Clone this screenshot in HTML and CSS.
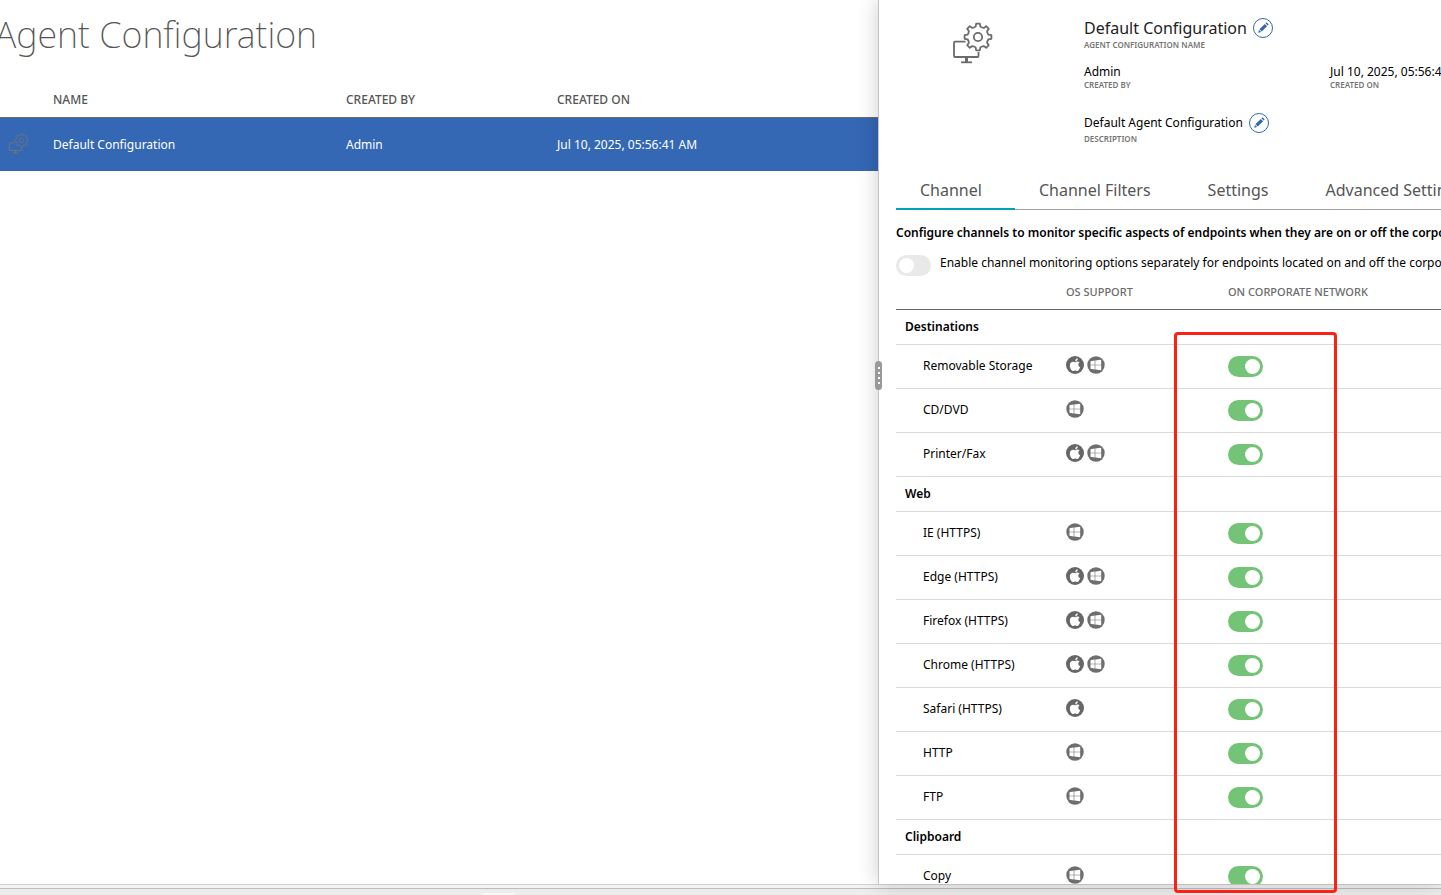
FILE: index.html
```html
<!DOCTYPE html>
<html lang="en">
<head>
    <meta charset="UTF-8">
    <meta name="viewport" content="width=device-width, initial-scale=1.0">
    <title>Agent Configuration</title>
    <link rel="stylesheet" href="styles.css">
</head>
<body>
    <!-- Shared icons -->
    <svg class="sprite" aria-hidden="true">
        <symbol id="icon-agent" viewBox="0 0 40 42">
            <g fill="none" stroke="currentColor" stroke-width="1.8" stroke-linejoin="round">
                <path transform="translate(25 15)" d="M-2.4-10.4L-1.8-13.4H1.8L2.4-10.4Q4-9.2 5.7-9.1L8.2-10.8L10.8-8.2L9.1-5.7Q9.2-4 10.4-2.4L13.4-1.8V1.8L10.4 2.4Q9.2 4 9.1 5.7L10.8 8.2L8.2 10.8L5.7 9.1Q4 9.2 2.4 10.4L1.8 13.4H-1.8L-2.4 10.4Q-4 9.2-5.7 9.1L-8.2 10.8L-10.8 8.2L-9.1 5.7Q-9.2 4-10.4 2.4L-13.4 1.8V-1.8L-10.4-2.4Q-9.2-4-9.1-5.7L-10.8-8.2L-8.2-10.8L-5.7-9.1Q-4-9.2-2.4-10.4Z"/>
                <circle cx="25" cy="15" r="4.2"/>
                <path d="M12.500 19.700H2Q1 19.700 1 20.700V34Q1 35 2 35H24.500Q25.500 35 25.500 34V30"/>
                <path d="M13.500 35V40" stroke-width="3"/>
                <path d="M8 40.300H19"/>
            </g>
        </symbol>
        <symbol id="icon-apple" viewBox="0 0 18 18">
            <circle cx="9" cy="9" r="9" fill="#666"/>
            <path transform="translate(-1.4 -1) scale(1.16)" fill="#fff" d="M9.200 5.400C9.100 3.900 10.100 2.900 11.300 2.800C11.400 4.200 10.500 5.300 9.200 5.400ZM12.900 6.500C11.300 7.500 11.600 9.900 13.400 10.600C12.900 12.200 11.900 13.800 10.800 13.800C10.200 13.800 9.900 13.400 9.100 13.400C8.300 13.400 8 13.800 7.400 13.800C5.900 13.800 4.500 11.300 4.500 9.200C4.500 7.100 5.800 5.800 7.300 5.800C8.100 5.800 8.600 6.200 9.200 6.200C9.800 6.200 10.300 5.700 11.200 5.700C11.900 5.700 12.500 6 12.900 6.500Z"/>
        </symbol>
        <symbol id="icon-windows" viewBox="0 0 18 18">
            <circle cx="9" cy="9" r="8.700" fill="#6e6e6e"/>
            <path fill="#fff" d="M3.500 5.200L7.700 4.600V8.700H3.500ZM8.300 4.500L14.200 3.700V8.700H8.300ZM3.500 9.300H7.700V13.400L3.500 12.800ZM8.300 9.300H14.200V14.300L8.300 13.500Z"/>
        </symbol>
        <symbol id="icon-edit" viewBox="0 0 20 20">
            <circle cx="10" cy="10" r="9.500" fill="#fff" stroke="#3566b1"/>
            <path fill="#3566b1" d="M5.200 14.800L6 11.900L8.100 14ZM6.400 11.300L11.800 5.900L14.100 8.200L8.700 13.600ZM12.400 5.300L13 4.700Q13.500 4.400 14 4.700L15.300 6Q15.600 6.500 15.300 7L14.700 7.600Z"/>
        </symbol>
    </svg>

    <main class="workspace">
        <section class="list-pane">
            <h1>Agent Configuration</h1>
            <table class="config-list">
                <thead>
                    <tr>
                        <th class="col-icon"></th>
                        <th class="col-name">Name</th>
                        <th class="col-by">Created By</th>
                        <th>Created On</th>
                    </tr>
                </thead>
                <tbody>
                    <tr>
                        <td><svg class="row-icon"><use href="#icon-agent"/></svg></td>
                        <td>Default Configuration</td>
                        <td>Admin</td>
                        <td>Jul 10, 2025, 05:56:41 AM</td>
                    </tr>
                </tbody>
            </table>
        </section>

        <section class="detail-pane">
            <div class="resizer"><i></i><i></i><i></i><i></i></div>
            <div class="detail-content">
                <div class="summary">
                    <svg class="summary-icon"><use href="#icon-agent"/></svg>
                    <div class="summary-fields">
                        <div class="field field-name">
                            <div class="value">Default Configuration
                                <button class="edit" aria-label="Edit name"><svg><use href="#icon-edit"/></svg></button>
                            </div>
                            <div class="caption">Agent Configuration Name</div>
                        </div>
                        <div class="field-row">
                            <div class="field">
                                <div class="value">Admin</div>
                                <div class="caption">Created By</div>
                            </div>
                            <div class="field">
                                <div class="value">Jul 10, 2025, 05:56:41 AM</div>
                                <div class="caption">Created On</div>
                            </div>
                        </div>
                        <div class="field field-description">
                            <div class="value">Default Agent Configuration
                                <button class="edit" aria-label="Edit description"><svg><use href="#icon-edit"/></svg></button>
                            </div>
                            <div class="caption">Description</div>
                        </div>
                    </div>
                </div>

                <nav class="tabs">
                    <a href="#channel" class="active">Channel</a>
                    <a href="#filters">Channel Filters</a>
                    <a href="#settings">Settings</a>
                    <a href="#advanced">Advanced Settings</a>
                </nav>

                <p class="intro">Configure channels to monitor specific aspects of endpoints when they are on or off the corporate network.</p>
                <div class="option">
                    <input type="checkbox" class="toggle" id="separate">
                    <label for="separate">Enable channel monitoring options separately for endpoints located on and off the corporate network.</label>
                </div>

                <table class="channels">
                    <thead>
                        <tr>
                            <th class="col-channel"></th>
                            <th class="col-os">OS Support</th>
                            <th>On Corporate Network</th>
                        </tr>
                    </thead>
                    <tbody>
                        <tr class="group"><th colspan="3">Destinations</th></tr>
                        <tr>
                            <td><label for="storage">Removable Storage</label></td>
                            <td><span class="os"><svg><use href="#icon-apple"/></svg><svg><use href="#icon-windows"/></svg></span></td>
                            <td><input type="checkbox" class="toggle" id="storage" checked></td>
                        </tr>
                        <tr>
                            <td><label for="cd">CD/DVD</label></td>
                            <td><span class="os"><svg><use href="#icon-windows"/></svg></span></td>
                            <td><input type="checkbox" class="toggle" id="cd" checked></td>
                        </tr>
                        <tr>
                            <td><label for="printer">Printer/Fax</label></td>
                            <td><span class="os"><svg><use href="#icon-apple"/></svg><svg><use href="#icon-windows"/></svg></span></td>
                            <td><input type="checkbox" class="toggle" id="printer" checked></td>
                        </tr>
                        <tr class="group"><th colspan="3">Web</th></tr>
                        <tr>
                            <td><label for="ie">IE (HTTPS)</label></td>
                            <td><span class="os"><svg><use href="#icon-windows"/></svg></span></td>
                            <td><input type="checkbox" class="toggle" id="ie" checked></td>
                        </tr>
                        <tr>
                            <td><label for="edge">Edge (HTTPS)</label></td>
                            <td><span class="os"><svg><use href="#icon-apple"/></svg><svg><use href="#icon-windows"/></svg></span></td>
                            <td><input type="checkbox" class="toggle" id="edge" checked></td>
                        </tr>
                        <tr>
                            <td><label for="firefox">Firefox (HTTPS)</label></td>
                            <td><span class="os"><svg><use href="#icon-apple"/></svg><svg><use href="#icon-windows"/></svg></span></td>
                            <td><input type="checkbox" class="toggle" id="firefox" checked></td>
                        </tr>
                        <tr>
                            <td><label for="chrome">Chrome (HTTPS)</label></td>
                            <td><span class="os"><svg><use href="#icon-apple"/></svg><svg><use href="#icon-windows"/></svg></span></td>
                            <td><input type="checkbox" class="toggle" id="chrome" checked></td>
                        </tr>
                        <tr>
                            <td><label for="safari">Safari (HTTPS)</label></td>
                            <td><span class="os"><svg><use href="#icon-apple"/></svg></span></td>
                            <td><input type="checkbox" class="toggle" id="safari" checked></td>
                        </tr>
                        <tr>
                            <td><label for="http">HTTP</label></td>
                            <td><span class="os"><svg><use href="#icon-windows"/></svg></span></td>
                            <td><input type="checkbox" class="toggle" id="http" checked></td>
                        </tr>
                        <tr>
                            <td><label for="ftp">FTP</label></td>
                            <td><span class="os"><svg><use href="#icon-windows"/></svg></span></td>
                            <td><input type="checkbox" class="toggle" id="ftp" checked></td>
                        </tr>
                        <tr class="group"><th colspan="3">Clipboard</th></tr>
                        <tr>
                            <td><label for="copy">Copy</label></td>
                            <td><span class="os"><svg><use href="#icon-windows"/></svg></span></td>
                            <td><input type="checkbox" class="toggle" id="copy" checked></td>
                        </tr>
                    </tbody>
                </table>
            </div>
            <div class="highlight"></div>
        </section>
    </main>
    <footer class="bottom-bar"><div class="bottom-tab"></div></footer>
</body>
</html>
```
FILE: styles.css
```css
/* General */
* {
    margin: 0;
    padding: 0;
    box-sizing: border-box;
}
body {
    font-family: "Noto Sans", sans-serif;
    font-size: 12px;
    line-height: 16px;
    color: #000;
    background-color: #fff;
    height: 100vh;
    display: flex;
    flex-direction: column;
    overflow: hidden;
}
table {
    border-collapse: collapse;
    width: 100%;
}
th {
    text-align: left;
}
.sprite {
    display: none;
}

.workspace {
    flex: 1;
    min-height: 0;
    display: grid;
    grid-template-columns: 878fr 563fr;
    grid-template-rows: minmax(0, 1fr);
}

/* Left list */
.list-pane {
    overflow: hidden;
}
h1 {
    font-size: 36px;
    line-height: 48px;
    font-weight: 200;
    color: #555;
    margin: 11px 0 24px -5px;
    white-space: nowrap;
}
.config-list {
    table-layout: fixed;
}
.config-list th {
    height: 34px;
    font-size: 12px;
    font-weight: 500;
    color: #555;
    text-transform: uppercase;
}
.config-list thead {
    border-bottom: 1px solid #6b6b6b;
}
.col-icon {
    width: 53px;
}
.col-name {
    width: 293px;
}
.col-by {
    width: 211px;
}
.config-list td {
    height: 54px;
    padding-top: 2px;
    color: #fff;
    background-color: #3467b4;
}
.config-list td:first-child {
    padding: 0 0 2px 9px;
}
.row-icon {
    display: block;
    width: 20px;
    height: 21px;
    color: #757575;
}

/* Right detail panel */
.detail-pane {
    position: relative;
    min-width: 0;
    background-color: #fff;
    border-left: 1px solid #c4c4c4;
    box-shadow: 0 0 20px rgba(0, 0, 0, 0.2);
}
.detail-content {
    height: 100%;
    overflow: hidden;
    padding: 17px 0 0 17px;
}
.resizer {
    position: absolute;
    top: 361px;
    left: -4px;
    width: 7px;
    height: 29px;
    border-radius: 4px;
    background-color: #999;
    display: flex;
    flex-direction: column;
    align-items: center;
    justify-content: center;
    gap: 3px;
}
.resizer i {
    width: 2px;
    height: 2px;
    background-color: #fff;
}

.summary {
    display: grid;
    grid-template-columns: 131px 1fr;
    height: 153px;
}
.summary-icon {
    width: 40px;
    height: 42px;
    margin: 5px 0 0 57px;
    color: #6b6b6b;
}
.summary-fields {
    padding-left: 57px;
    white-space: nowrap;
}
.field .value {
    display: flex;
    align-items: center;
    gap: 6px;
}
.field .caption {
    font-size: 8px;
    line-height: 10px;
    font-weight: 600;
    color: #757575;
    text-transform: uppercase;
}
.field-name .value {
    font-size: 16px;
    line-height: 22px;
    color: #222;
}
.field-name .caption {
    margin-top: 1px;
}
.field-row {
    display: grid;
    grid-template-columns: 246px 1fr;
    margin: 14px 0 23px;
}
.field-description .caption {
    margin-top: 1px;
}
.edit {
    width: 20px;
    height: 20px;
    border: none;
    background: none;
    cursor: pointer;
}
.edit svg {
    display: block;
    width: 20px;
    height: 20px;
}

/* Tabs */
.tabs {
    display: flex;
    border-bottom: 1px solid #a0a0a0;
    white-space: nowrap;
    height: 40px;
}
.tabs a {
    flex: none;
    height: 40px;
    padding: 0 33px 0 24px;
    font-size: 16px;
    line-height: 40px;
    color: #555;
    text-decoration: none;
}
.tabs .active {
    border-bottom: 2px solid #00a3b4;
}

.intro {
    margin-top: 15px;
    font-weight: 600;
    white-space: nowrap;
}
.option {
    display: flex;
    gap: 9px;
    margin-top: 14px;
    white-space: nowrap;
}

/* Toggle switch */
.toggle {
    appearance: none;
    flex: none;
    display: block;
    width: 35px;
    height: 21px;
    padding: 3px;
    border-radius: 11px;
    background-color: #e9e9e9;
    cursor: pointer;
}
.toggle::before {
    content: "";
    display: block;
    width: 15px;
    height: 15px;
    border-radius: 50%;
    background-color: #fff;
}
.toggle:checked {
    background-color: #73c476;
}
.toggle:checked::before {
    margin-left: 14px;
}

/* Channel table */
.channels {
    table-layout: fixed;
}
.channels tr {
    border-bottom: 1px solid #d9d9d9;
}
.channels thead tr {
    border-bottom-color: #666;
}
.channels thead th {
    height: 33px;
    font-size: 11px;
    font-weight: 500;
    color: #6b6b6b;
    text-transform: uppercase;
    white-space: nowrap;
}
.col-channel {
    width: 170px;
}
.col-os {
    width: 162px;
}
.channels .group th {
    height: 35px;
    padding-left: 9px;
    font-weight: 600;
}
.channels td {
    height: 44px;
}
.channels td:first-child {
    padding-left: 27px;
}
.os {
    display: flex;
    gap: 3px;
    padding-bottom: 3px;
}
.os svg {
    width: 18px;
    height: 18px;
}

/* Marked column */
.highlight {
    position: absolute;
    top: 332px;
    left: 295px;
    width: 163px;
    height: 561px;
    border: 3px solid #ff2015;
    border-radius: 4px;
    pointer-events: none;
}

.bottom-bar {
    height: 11px;
    border-top: 1px solid #d4d4d4;
    background: linear-gradient(#f3f3f3 3px, #bdbdbd 3px, #bdbdbd 4px, #ededed 4px);
    padding-top: 8px;
}
.bottom-tab {
    width: 33px;
    height: 2px;
    margin-left: 482px;
    border-radius: 2px 2px 0 0;
    background-color: #f8f8f8;
}
```
